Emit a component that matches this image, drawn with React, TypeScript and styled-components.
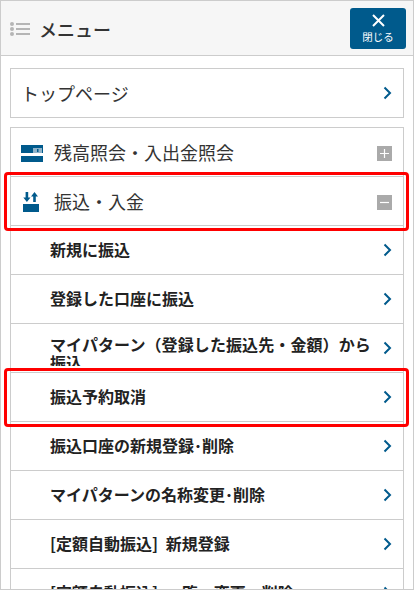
import React from 'react';
import styled, { createGlobalStyle } from 'styled-components';

const GlobalStyle = createGlobalStyle`
  html, body {
    margin: 0;
    padding: 0;
    background: #fff;
  }
  * {
    box-sizing: border-box;
  }
`;

const Frame = styled.div`
  width: 414px;
  height: 590px;
  overflow: hidden;
  border: 1px solid #ccc;
  background: #fff;
  color: #333;
  font-family: "Noto Sans CJK JP", "Noto Sans", sans-serif;
`;

const Header = styled.header`
  height: 55px;
  display: flex;
  align-items: center;
  justify-content: space-between;
  padding: 7px 7px 6px 9px;
  background: #f6f6f6;
  border-bottom: 1px solid #ccc;
`;

const HeaderTitle = styled.div`
  display: flex;
  align-items: center;
  gap: 9px;
  font-size: 18px;
  font-weight: 500;
  color: #333;
`;

const CloseButton = styled.button`
  width: 56px;
  height: 41px;
  padding: 0;
  display: flex;
  flex-direction: column;
  align-items: center;
  justify-content: center;
  background: #005a8c;
  color: #fff;
  border: none;
  border-radius: 3px;
  font-family: inherit;
  font-size: 10.5px;
  line-height: 13px;
`;

const Content = styled.div`
  padding: 12px 9px 0;
`;

const TopCard = styled.div`
  height: 50px;
  margin-bottom: 9px;
  padding: 0 11px 0 10px;
  display: flex;
  align-items: center;
  justify-content: space-between;
  border: 1px solid #ccc;
  font-size: 18px;
  color: #333;
`;

const MenuCard = styled.div`
  border: 1px solid #ccc;
  border-bottom: none;
`;

const Category = styled.div`
  position: relative;
  height: 49px;
  display: flex;
  align-items: center;
  justify-content: space-between;
  padding: 2px 11px 0 9px;
  border-bottom: 1px solid #ccc;
  color: #333;
`;

const CategoryLabel = styled.div`
  display: flex;
  align-items: center;
  gap: 11px;
  font-size: 18px;
`;

const CategoryText = styled.span`
  padding-bottom: 2px;
`;

const IconSlot = styled.span`
  width: 23px;
  display: flex;
  justify-content: center;
`;

const Toggle = styled.span`
  width: 15px;
  height: 15px;
  display: flex;
  background: #aaa;
`;

const Row = styled.div`
  position: relative;
  height: 49px;
  padding: 0 11px 0 39px;
  display: flex;
  align-items: center;
  justify-content: space-between;
  border-bottom: 1px solid #ccc;
  overflow: hidden;
`;

const HighlightRow = styled(Row)`
  overflow: visible;
`;

const RowLabel = styled.span`
  font-size: 16px;
  font-weight: 700;
  color: #222;
  line-height: 18px;
  padding-bottom: 2px;
  word-spacing: 4px;
`;

const WrappedLabel = styled(RowLabel)`
  width: 325px;
  height: 42px;
  align-self: flex-start;
  padding: 11px 0 0;
  overflow: hidden;
  letter-spacing: 0.1px;
`;

const Highlight = styled.span`
  position: absolute;
  left: -7px;
  right: -6px;
  top: -5px;
  bottom: -6px;
  border: 3px solid #f00;
  border-radius: 4px;
  pointer-events: none;
`;

const ListIcon = () => (
  <svg width="20" height="14" viewBox="0 0 20 14">
    <g fill="#b5b5b5">
      <circle cx="2" cy="2" r="2" />
      <circle cx="2" cy="7" r="2" />
      <circle cx="2" cy="12" r="2" />
      <rect x="6" y="1" width="14" height="2" />
      <rect x="6" y="6" width="14" height="2" />
      <rect x="6" y="11" width="14" height="2" />
    </g>
  </svg>
);

const CloseIcon = () => (
  <svg width="13" height="13" viewBox="0 0 13 13" style={{ marginBottom: 3 }}>
    <path d="M1 1l11 11M12 1L1 12" stroke="#fff" strokeWidth="2" fill="none" />
  </svg>
);

const Chevron = () => (
  <svg width="9" height="14" viewBox="0 0 9 14" style={{ flexShrink: 0 }}>
    <path d="M1.5 1.5L7 7l-5.5 5.5" stroke="#005a8c" strokeWidth="2" fill="none" />
  </svg>
);

const CardIcon = () => (
  <svg width="22" height="17" viewBox="0 0 22 17">
    <rect width="22" height="17" fill="#005a8c" />
    <rect y="8" width="22" height="3" fill="#fff" />
    <rect x="12" y="3" width="9" height="5" fill="#8fb3ca" />
    <rect x="16" y="4" width="1.5" height="3" fill="#005a8c" />
  </svg>
);

const TransferIcon = () => (
  <svg width="17" height="20" viewBox="0 0 17 20">
    <g fill="#005a8c">
      <rect y="12" width="16" height="8" />
      <path d="M2.6 0h2.6v5.5h2.3L3.9 10 .3 5.5h2.3z" />
      <path d="M12.8 10h-2.6V4.5H8L11.5 0 15 4.5h-2.2z" />
    </g>
  </svg>
);

const PlusIcon = () => (
  <svg width="15" height="15" viewBox="0 0 15 15">
    <path d="M3 7.5h9M7.5 3v9" stroke="#fff" strokeWidth="1.2" />
  </svg>
);

const MinusIcon = () => (
  <svg width="15" height="15" viewBox="0 0 15 15">
    <path d="M3 7.5h9" stroke="#fff" strokeWidth="1.2" />
  </svg>
);

const items = [
  '新規に振込',
  '登録した口座に振込',
];

const lowerItems = [
  '振込口座の新規登録･削除',
  'マイパターンの名称変更･削除',
  '[定額自動振込] 新規登録',
  '[定額自動振込] 一覧・変更・削除',
];

export default function App() {
  return (
    <Frame>
      <GlobalStyle />
      <Header>
        <HeaderTitle>
          <ListIcon />
          メニュー
        </HeaderTitle>
        <CloseButton>
          <CloseIcon />
          閉じる
        </CloseButton>
      </Header>
      <Content>
        <TopCard>
          トップページ
          <Chevron />
        </TopCard>
        <MenuCard>
          <Category>
            <CategoryLabel>
              <IconSlot><CardIcon /></IconSlot>
              <CategoryText>残高照会・入出金照会</CategoryText>
            </CategoryLabel>
            <Toggle><PlusIcon /></Toggle>
          </Category>
          <Category>
            <CategoryLabel>
              <IconSlot><TransferIcon /></IconSlot>
              <CategoryText>振込・入金</CategoryText>
            </CategoryLabel>
            <Toggle><MinusIcon /></Toggle>
            <Highlight />
          </Category>
          {items.map(label => (
            <Row key={label}>
              <RowLabel>{label}</RowLabel>
              <Chevron />
            </Row>
          ))}
          <Row>
            <WrappedLabel>マイパターン（登録した振込先・金額）から振込</WrappedLabel>
            <Chevron />
          </Row>
          <HighlightRow>
            <RowLabel>振込予約取消</RowLabel>
            <Chevron />
            <Highlight />
          </HighlightRow>
          {lowerItems.map(label => (
            <Row key={label}>
              <RowLabel>{label}</RowLabel>
              <Chevron />
            </Row>
          ))}
        </MenuCard>
      </Content>
    </Frame>
  );
}
